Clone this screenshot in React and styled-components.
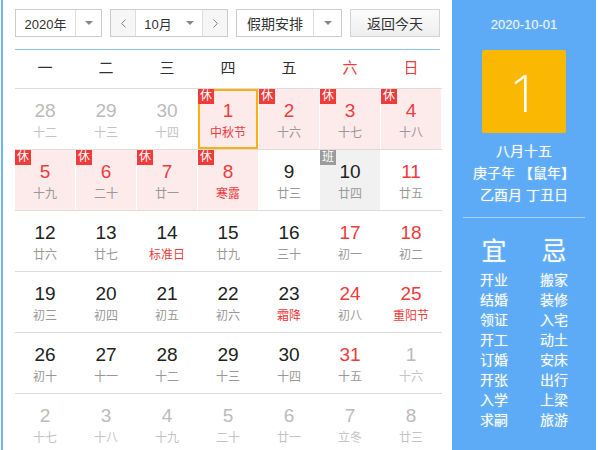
import React from 'react';
import styled, { createGlobalStyle } from 'styled-components';
import { ChevronLeft, ChevronRight } from 'lucide-react';

const GlobalStyle = createGlobalStyle`
  body {
    margin: 0;
    background: #fff;
    font-family: "Liberation Sans", "Noto Sans CJK SC", sans-serif;
  }
`;

const RED = '#ee3b3b';

const weekNames = ['一', '二', '三', '四', '五', '六', '日'];

// d, lunar, flags: o = other month, w = weekend, x = 休, b = 班, f = festival, s = selected
const weeks = [
  [[28, '十二', 'o'], [29, '十三', 'o'], [30, '十四', 'o'], [1, '中秋节', 'xfs'], [2, '十六', 'x'], [3, '十七', 'xw'], [4, '十八', 'xw']],
  [[5, '十九', 'x'], [6, '二十', 'x'], [7, '廿一', 'x'], [8, '寒露', 'xf'], [9, '廿三', ''], [10, '廿四', 'b'], [11, '廿五', 'w']],
  [[12, '廿六', ''], [13, '廿七', ''], [14, '标准日', 'f'], [15, '廿九', ''], [16, '三十', ''], [17, '初一', 'w'], [18, '初二', 'w']],
  [[19, '初三', ''], [20, '初四', ''], [21, '初五', ''], [22, '初六', ''], [23, '霜降', 'f'], [24, '初八', 'w'], [25, '重阳节', 'wf']],
  [[26, '初十', ''], [27, '十一', ''], [28, '十二', ''], [29, '十三', ''], [30, '十四', ''], [31, '十五', 'w'], [1, '十六', 'o']],
  [[2, '十七', 'o'], [3, '十八', 'o'], [4, '十九', 'o'], [5, '二十', 'o'], [6, '廿一', 'o'], [7, '立冬', 'o'], [8, '廿三', 'o']],
];

const yi = ['开业', '结婚', '领证', '开工', '订婚', '开张', '入学', '求嗣'];
const ji = ['搬家', '装修', '入宅', '动土', '安床', '出行', '上梁', '旅游'];

const Wrapper = styled.div`
  display: flex;
  width: 595px;
  height: 450px;
  margin-left: 1px;
  border-left: 2px solid #6db3f6;
  overflow: hidden;
`;

const Main = styled.div`
  width: 427px;
  padding: 9px 10px 0 12px;
`;

const Toolbar = styled.div`
  display: flex;
  gap: 8px;
  height: 28px;
  padding-bottom: 12px;
  border-bottom: 1px solid #8cc5f5;
  width: 425px;
`;

const Select = styled.div`
  display: flex;
  width: ${p => p.w}px;
  height: 28px;
  box-sizing: border-box;
  border: 1px solid #ccc;
  background: #fff;
  font-size: 13px;
  color: #333;
`;

const SelectLabel = styled.div`
  flex: 1;
  display: flex;
  align-items: center;
  justify-content: center;
  gap: ${p => (p.arrow ? '14px' : '0')};
`;

const ArrowBox = styled.div`
  width: ${p => p.w || 25}px;
  border-left: 1px solid #ddd;
  display: flex;
  align-items: center;
  justify-content: center;
`;

const Caret = styled.span`
  width: 0;
  height: 0;
  border-left: 4px solid transparent;
  border-right: 4px solid transparent;
  border-top: 4px solid #888;
`;

const NavBtn = styled.div`
  width: 24px;
  display: flex;
  align-items: center;
  justify-content: center;
  background: #f6f6f6;
  color: #777;
  border-${p => p.side}: 1px solid #ddd;
`;

const TodayBtn = styled.div`
  width: 90px;
  height: 28px;
  box-sizing: border-box;
  border: 1px solid #d4d4d4;
  background: linear-gradient(#fbfbfb, #efefef);
  display: flex;
  align-items: center;
  justify-content: center;
  font-size: 14px;
  color: #333;
`;

const HeadRow = styled.div`
  display: grid;
  grid-template-columns: repeat(7, 60px);
  column-gap: 1px;
  height: 37px;
  margin-top: 1px;
  align-items: center;
  border-bottom: 1px solid #dcdcdc;
`;

const HeadCell = styled.div`
  text-align: center;
  font-size: 15px;
  line-height: 18px;
  padding-bottom: 3px;
  color: ${p => (p.red ? RED : '#333')};
`;

const WeekRow = styled.div`
  display: grid;
  grid-template-columns: repeat(7, 60px);
  column-gap: 1px;
  height: 60px;
  border-bottom: 1px solid #dcdcdc;
`;

const Cell = styled.div`
  position: relative;
  display: flex;
  flex-direction: column;
  align-items: center;
  padding-top: 12px;
  box-sizing: border-box;
  background: ${p => p.bg};
  box-shadow: ${p => (p.selected ? 'inset 0 0 0 2px #f7b20f' : 'none')};
`;

const Num = styled.div`
  font-size: 19px;
  line-height: 20px;
  color: ${p => p.color};
`;

const Lunar = styled.div`
  font-size: 12px;
  line-height: 16px;
  margin-top: 4px;
  color: ${p => p.color};
`;

const Badge = styled.span`
  position: absolute;
  top: 0;
  left: 0;
  width: 16px;
  height: 15px;
  font-size: 12px;
  line-height: 15px;
  text-align: center;
  color: #fff;
  background: ${p => (p.work ? '#9b9b9b' : '#f03b3b')};
`;

const Side = styled.div`
  width: 144px;
  background: #5dabf6;
  display: flex;
  flex-direction: column;
  align-items: center;
  color: #fff;
  text-shadow: 0 0 2px rgba(255, 255, 255, 0.35);
`;

const DateText = styled.div`
  margin-top: 16px;
  font-size: 13px;
  line-height: 18px;
  color: #eef6ff;
`;

const DayBox = styled.div`
  margin-top: 16px;
  width: 84px;
  height: 83px;
  border-radius: 2px;
  background: #fbb803;
  display: flex;
  align-items: center;
  justify-content: center;
  font-size: 52px;
  font-weight: 300;
  font-family: "Open Sans", "Liberation Sans", sans-serif;
  text-shadow: none;
`;

const LunarInfo = styled.div`
  margin-top: 7px;
  font-size: 14px;
  line-height: 22px;
  text-align: center;
`;

const SideDivider = styled.div`
  width: 122px;
  height: 1px;
  margin-top: 11px;
  background: #a9d2fa;
`;

const Almanac = styled.div`
  display: grid;
  grid-template-columns: 60px 60px;
  margin-top: 18px;
  text-align: center;
`;

const AlmanacCol = styled.div`
  display: flex;
  flex-direction: column;
  align-items: center;
`;

const AlmanacTitle = styled.div`
  font-size: 25px;
  line-height: 30px;
  margin-bottom: 4px;
`;

const AlmanacItem = styled.div`
  font-size: 14px;
  line-height: 20px;
`;

function numColor(flags) {
  if (flags.includes('o')) return '#bbb';
  if (flags.includes('x')) return RED;
  if (flags.includes('w') && !flags.includes('b')) return RED;
  return '#222';
}

function lunarColor(flags) {
  if (flags.includes('o')) return '#c4c4c4';
  if (flags.includes('f')) return RED;
  return '#999';
}

function cellBg(flags) {
  if (flags.includes('x')) return '#fdeaeb';
  if (flags.includes('b')) return '#f1f1f1';
  return 'transparent';
}

export default function App() {
  return (
    <>
      <GlobalStyle />
      <Wrapper>
        <Main>
          <Toolbar>
            <Select w={87}>
              <SelectLabel>2020年</SelectLabel>
              <ArrowBox><Caret /></ArrowBox>
            </Select>
            <Select w={118}>
              <NavBtn side="right"><ChevronLeft size={15} strokeWidth={1.5} /></NavBtn>
              <SelectLabel arrow>10月<Caret /></SelectLabel>
              <NavBtn side="left"><ChevronRight size={15} strokeWidth={1.5} /></NavBtn>
            </Select>
            <Select w={106}>
              <SelectLabel style={{ fontSize: 14 }}>假期安排</SelectLabel>
              <ArrowBox w={27}><Caret /></ArrowBox>
            </Select>
            <TodayBtn>返回今天</TodayBtn>
          </Toolbar>
          <HeadRow>
            {weekNames.map((n, i) => (
              <HeadCell key={n} red={i >= 5}>{n}</HeadCell>
            ))}
          </HeadRow>
          {weeks.map((week, wi) => (
            <WeekRow key={wi}>
              {week.map(([d, lunar, flags], ci) => (
                <Cell key={ci} bg={cellBg(flags)} selected={flags.includes('s')}>
                  {flags.includes('x') && <Badge>休</Badge>}
                  {flags.includes('b') && <Badge work>班</Badge>}
                  <Num color={numColor(flags)}>{d}</Num>
                  <Lunar color={lunarColor(flags)}>{lunar}</Lunar>
                </Cell>
              ))}
            </WeekRow>
          ))}
        </Main>
        <Side>
          <DateText>2020-10-01</DateText>
          <DayBox>1</DayBox>
          <LunarInfo>
            <div>八月十五</div>
            <div>庚子年 【鼠年】</div>
            <div>乙酉月 丁丑日</div>
          </LunarInfo>
          <SideDivider />
          <Almanac>
            <AlmanacCol>
              <AlmanacTitle>宜</AlmanacTitle>
              {yi.map(t => <AlmanacItem key={t}>{t}</AlmanacItem>)}
            </AlmanacCol>
            <AlmanacCol>
              <AlmanacTitle>忌</AlmanacTitle>
              {ji.map(t => <AlmanacItem key={t}>{t}</AlmanacItem>)}
            </AlmanacCol>
          </Almanac>
        </Side>
      </Wrapper>
    </>
  );
}
